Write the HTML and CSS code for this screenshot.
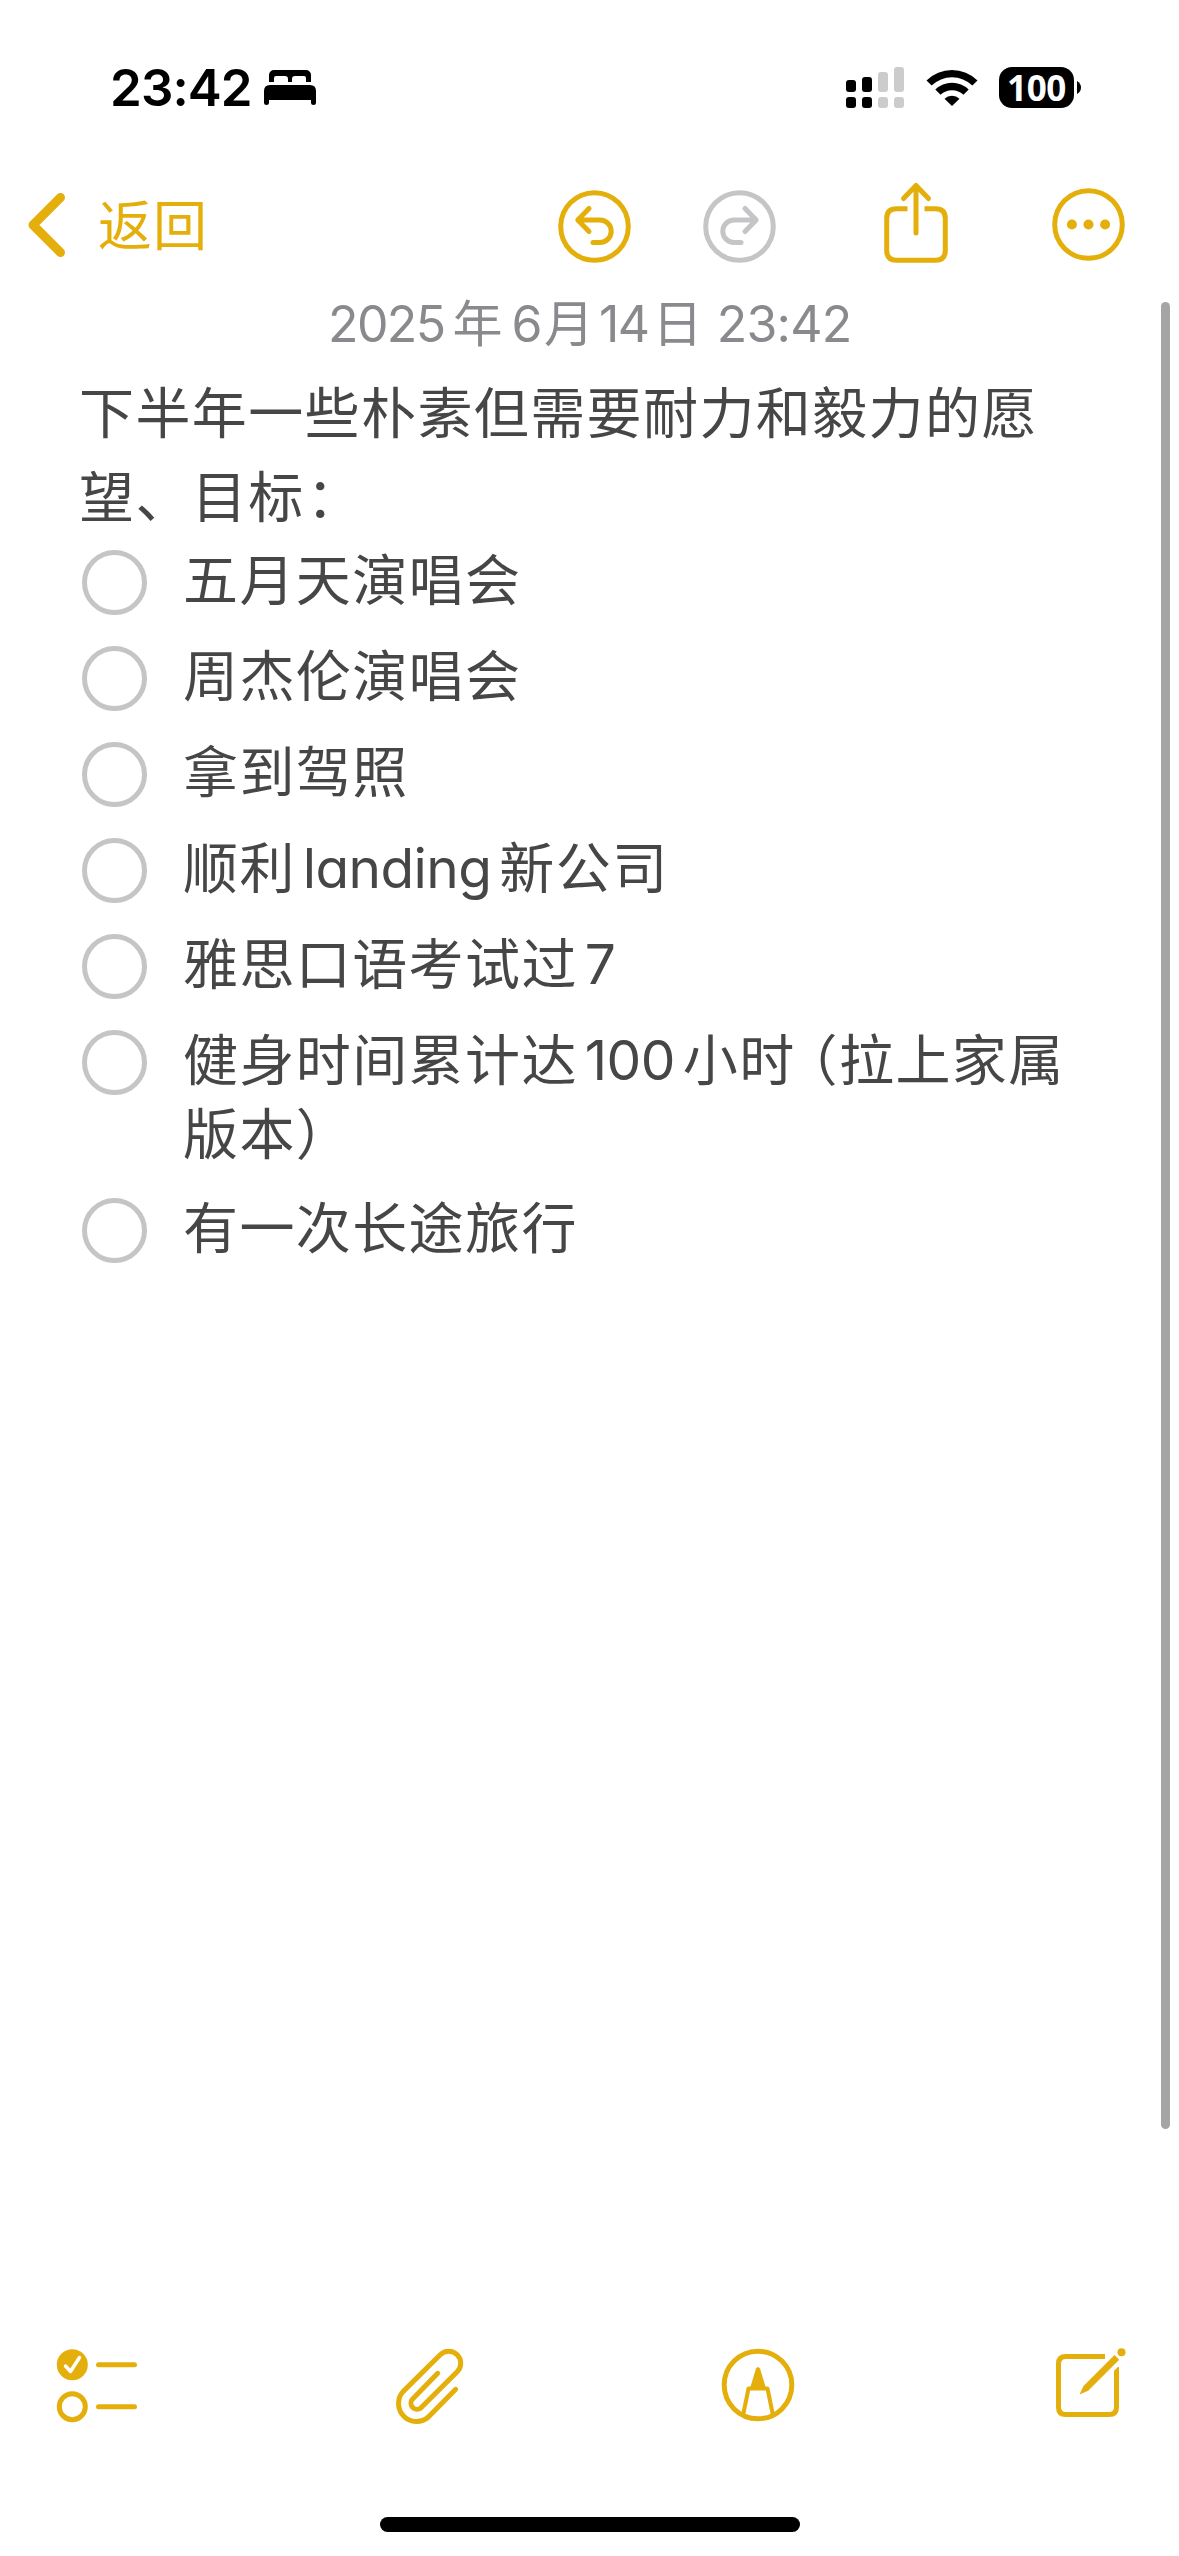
FILE: index.html
```
<!DOCTYPE html>
<html lang="zh-CN">
<head>
<meta charset="UTF-8">
<meta name="viewport" content="width=device-width, initial-scale=1.0">
<title>备忘录</title>
<link rel="stylesheet" href="styles.css">
</head>
<body>
<div class="screen">

    <header class="status-bar">
        <div class="status-left">
            <span class="clock">23:42</span>
            <svg class="bed" width="52" height="36" viewBox="0 0 52 36">
                <path d="M5 12V5a5 5 0 0 1 5-5h32a5 5 0 0 1 5 5v7h-5V8q0-2-2-2H31q-3 0-3 3v3h-4V9q0-3-3-3h-9q-2 0-2 2v4z"/>
                <path d="M0 33V21q0-6 6-6h40q6 0 6 6v12q0 2-2.500 2T47 33v-3H5v3q0 2-2.500 2T0 33z"/>
            </svg>
        </div>
        <div class="status-right">
            <svg class="signal" width="58" height="41" viewBox="0 0 58 41">
                <rect x="0" y="13" width="10" height="12" rx="3"/>
                <rect x="16" y="10" width="10" height="15" rx="3"/>
                <rect class="off" x="32" y="5" width="10" height="20" rx="3"/>
                <rect class="off" x="48" y="0" width="10" height="25" rx="3"/>
                <rect x="0" y="30" width="10" height="11" rx="3"/>
                <rect x="16" y="30" width="10" height="11" rx="3"/>
                <rect class="off" x="32" y="30" width="10" height="11" rx="3"/>
                <rect class="off" x="48" y="30" width="10" height="11" rx="3"/>
            </svg>
            <svg class="wifi" width="52" height="38" viewBox="0 0 52 38">
                <path d="M26 37l-7.500-7.300a11 11 0 0 1 15 0z"/>
                <path d="M9.300 20.500a24 24 0 0 1 33.400 0l-5.200 5.200a16.800 16.800 0 0 0-23 0z"/>
                <path d="M.500 11.400a36.500 36.500 0 0 1 51 0l-5.100 5.200a29.300 29.300 0 0 0-40.800 0z"/>
            </svg>
            <div class="battery">100</div>
            <svg class="battery-cap" width="4" height="13" viewBox="0 0 4 13"><path d="M0 0q4 2.500 4 6.500T0 13z"/></svg>
        </div>
    </header>

    <nav class="nav-bar">
        <a class="back">
            <svg width="38" height="64" viewBox="0 0 38 64"><path d="M32.500 4.500L5 32l27.500 27.500"/></svg>
            <span>返回</span>
        </a>
        <div class="actions">
            <svg class="undo" width="73" height="73" viewBox="0 0 73 73">
                <circle cx="36.500" cy="36.500" r="33.800"/>
                <path d="M31 18.500L19.800 30 31 41.500M20.500 30H42a11.200 11.200 0 0 1 0 22.400h-7"/>
            </svg>
            <svg class="redo" width="73" height="73" viewBox="0 0 73 73">
                <circle cx="36.500" cy="36.500" r="33.800"/>
                <path d="M42 18.500L53.200 30 42 41.500M52.500 30H31a11.200 11.200 0 0 0 0 22.400h7"/>
            </svg>
            <svg class="share" width="64" height="80" viewBox="0 0 64 80">
                <path class="butt" d="M23.500 25.800H12.500q-9.800 0-9.800 9.800v31.800q0 9.800 9.800 9.800h39q9.800 0 9.800-9.800V35.600q0-9.800-9.800-9.800h-11"/>
                <path d="M32 2.500V50M19.500 15.500L32 2.500l12.500 13"/>
            </svg>
            <svg class="more" width="73" height="73" viewBox="0 0 73 73">
                <circle cx="36.500" cy="36.500" r="33.800"/>
                <circle class="dot" cx="19.900" cy="36.500" r="5"/>
                <circle class="dot" cx="36.500" cy="36.500" r="5"/>
                <circle class="dot" cx="53.100" cy="36.500" r="5"/>
            </svg>
        </div>
    </nav>

    <main class="note">
        <div class="date">2025<span class="cjk">年</span>6<span class="cjk month">月</span>14<span class="cjk day">日</span> <span class="time">23:42</span></div>
        <p class="intro">下半年一些朴素但需要耐力和毅力的愿望、目标<span class="colon">：</span></p>
        <ul class="checklist">
            <li><span class="check"></span><span class="text">五月天演唱会</span></li>
            <li><span class="check"></span><span class="text">周杰伦演唱会</span></li>
            <li><span class="check"></span><span class="text">拿到驾照</span></li>
            <li><span class="check"></span><span class="text">顺利<span class="latin">landing</span>新公司</span></li>
            <li><span class="check"></span><span class="text">雅思口语考试过<span class="latin">7</span></span></li>
            <li class="wrapped"><span class="check"></span><span class="text">健身时间累计达<span class="latin">100</span>小时<span class="paren">（</span>拉上家属版本）</span></li>
            <li><span class="check"></span><span class="text">有一次长途旅行</span></li>
        </ul>
    </main>

    <footer class="toolbar">
        <svg width="82" height="76" viewBox="0 0 82 76">
            <circle class="dot" cx="16.300" cy="16.700" r="15.500"/>
            <path class="tick" d="M9.500 18l5 5.500 9-14"/>
            <circle cx="16.300" cy="58.700" r="13"/>
            <path d="M42.500 16.700H78.500M42.500 58.700H78.500"/>
        </svg>
        <svg width="70" height="78" viewBox="395 2348 70 78">
            <path d="M456.700 2389.300L429.400 2417a18 18 0 0 1-25.400-25.400l37.200-36.800a12 12 0 0 1 17 17L422 2407.800a6.100 6.100 0 0 1-8.600-8.600l25.300-25.900"/>
        </svg>
        <svg width="74" height="74" viewBox="0 0 74 74">
            <circle cx="37" cy="37" r="33.800"/>
            <path class="dot" d="M35 20.500q2-3 4 0L45.500 42h-17z"/>
            <path class="thin" d="M22.500 65l5-24.500h19l5 24.500"/>
        </svg>
        <svg width="74" height="72" viewBox="0 0 74 72">
            <path class="butt" d="M54 8.500H14.800q-7.300 0-7.300 7.300v43.400q0 7.300 7.300 7.300h43.400q7.300 0 7.300-7.300V19"/>
            <path class="cut" d="M34 42L67 9"/>
            <path class="dot" d="M28.500 46.500l4-8.500L63.500 7l4.700 4.700-31 31z"/>
            <circle class="dot" cx="70.500" cy="4.300" r="4"/>
        </svg>
    </footer>
    <div class="home-indicator"></div>
    <div class="scrollbar"></div>
</div>
</body>
</html>
```

FILE: styles.css
```
* {
    box-sizing: border-box;
}
body {
    margin: 0;
    background: #fff;
    font-family: Inter, "Noto Sans CJK SC", sans-serif;
    color: #464646;
}
.screen {
    position: relative;
    display: flex;
    flex-direction: column;
    width: 1179px;
    height: 2556px;
    overflow: hidden;
}
svg {
    display: block;
    flex: none;
    overflow: visible;
}

/* status bar */
.status-bar {
    display: flex;
    justify-content: space-between;
    height: 162px;
    padding: 67px 98px 0 110px;
    color: #000;
}
.status-left, .status-right {
    display: flex;
    align-items: center;
    height: 41px;
}
.clock {
    width: 154px;
    font-size: 51px;
    font-weight: 600;
    letter-spacing: -.9px;
}
.off {
    fill: #ccc;
}
.signal {
    margin-right: 1px;
}
.wifi {
    margin: 0 21px;
}
.battery {
    width: 75px;
    height: 41px;
    border-radius: 13px;
    background: #000;
    color: #fff;
    font: 700 35px/41px "Open Sans", sans-serif;
    letter-spacing: -.3px;
    text-align: center;
}
.battery-cap {
    margin-left: 3px;
}

/* navigation */
.nav-bar {
    display: flex;
    justify-content: space-between;
    height: 127px;
    padding: 21px 54px 0 28px;
    color: #e4af0a;
}
.nav-bar svg, .toolbar svg {
    fill: none;
    stroke: #e4af0a;
    stroke-width: 5;
    stroke-linecap: round;
    stroke-linejoin: round;
}
.nav-bar .dot, .toolbar .dot {
    fill: #e4af0a;
    stroke: none;
}
.back {
    display: flex;
    align-items: center;
    gap: 32px;
    height: 84px;
    font-size: 54px;
    letter-spacing: 1px;
}
.nav-bar .back svg {
    stroke-width: 9;
}
.back span {
    padding-bottom: 5px;
}
.actions {
    display: flex;
    align-items: flex-start;
}
.undo, .redo {
    margin-top: 7px;
}
.redo {
    margin-left: 72px;
}
.nav-bar .redo {
    stroke: #c5c5c7;
}
.share {
    margin-left: 108px;
}
.more {
    margin: 5px 0 0 104px;
}
.nav-bar .butt, .toolbar .butt {
    stroke-linecap: butt;
}

/* note */
.note {
    flex: 1;
    padding: 0 80px 0 79px;
    font-size: 55px;
    letter-spacing: 1.4px;
}
.date {
    height: 82px;
    padding-left: 249px;
    line-height: 70px;
    font-size: 50px;
    letter-spacing: -1.6px;
    color: #8a8a8e;
    white-space: nowrap;
}
.cjk {
    margin: 0 9px 0 8px;
    font-size: 50px;
    letter-spacing: 0;
}
.month {
    margin: 0 5px 0 3px;
}
.day {
    margin: 0 2px 0 4px;
}
.time {
    letter-spacing: -.8px;
}
.intro {
    margin: 0;
    line-height: 84px;
}
.colon {
    margin-left: 2px;
}
.checklist {
    margin: 4px 0 0;
    padding: 0;
    list-style: none;
    line-height: 74px;
}
.checklist li {
    display: flex;
    align-items: flex-start;
    gap: 36px;
    margin-bottom: 22px;
}
.checklist .wrapped {
    margin-bottom: 20px;
}
.check {
    flex: none;
    width: 65px;
    height: 65px;
    margin: 7px 0 0 3px;
    border: 5px solid #c5c5c7;
    border-radius: 50%;
}
.latin {
    margin: 0 8px 0 7px;
    letter-spacing: -.6px;
    font-feature-settings: "cv11";
}
.paren {
    margin-left: -13px;
}

/* bottom toolbar */
.toolbar {
    display: flex;
    justify-content: space-between;
    align-items: flex-start;
    height: 169px;
    padding: 0 54px 0 56px;
}
.toolbar .tick {
    stroke: #fff;
    stroke-width: 3.5;
}
.toolbar .thin {
    stroke-width: 4;
}
.toolbar .cut {
    stroke: #fff;
    stroke-width: 14;
    stroke-linecap: butt;
}
.home-indicator {
    width: 420px;
    height: 15px;
    margin: 0 0 24px 380px;
    border-radius: 8px;
    background: #000;
}
.scrollbar {
    position: absolute;
    top: 302px;
    right: 9px;
    width: 9px;
    height: 1827px;
    border-radius: 5px;
    background: #a5a5a5;
}
```
